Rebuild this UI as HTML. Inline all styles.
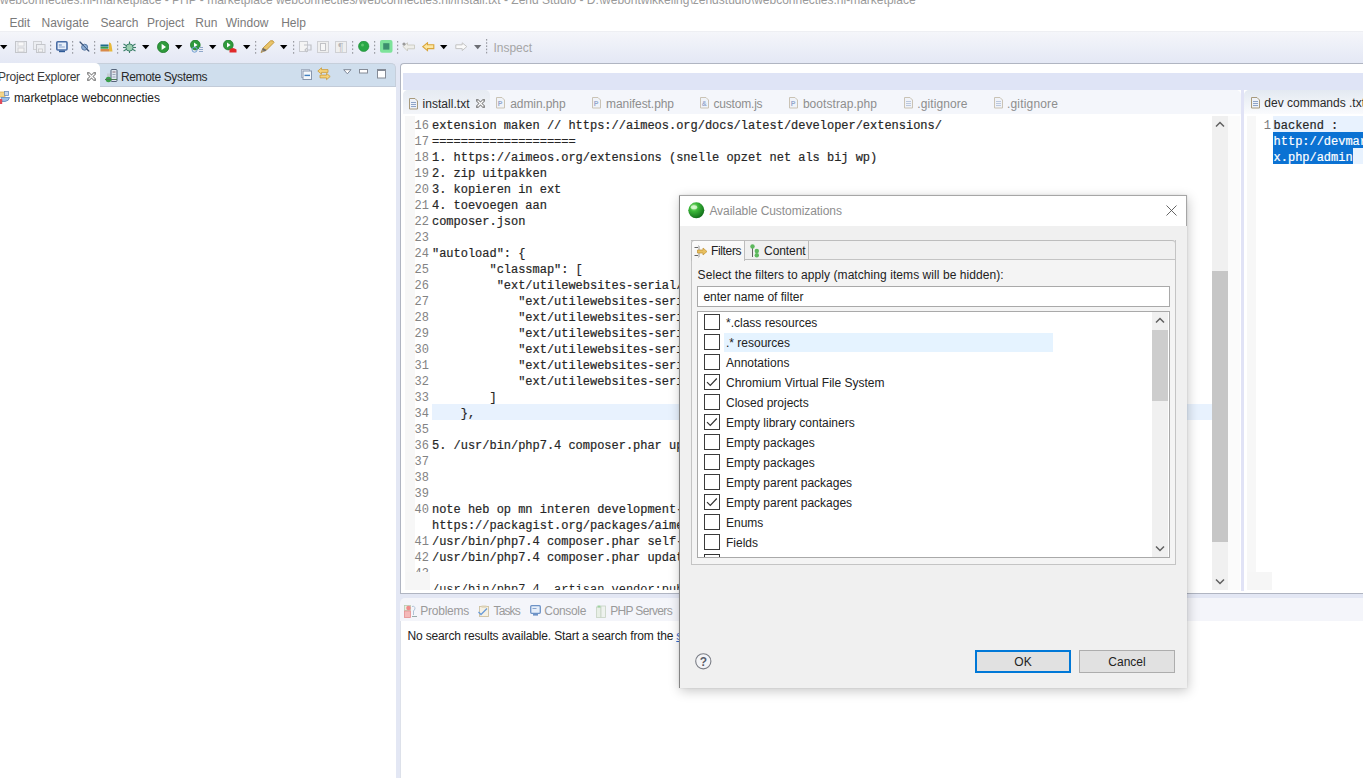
<!DOCTYPE html>
<html><head><meta charset="utf-8"><style>
html,body{margin:0;padding:0;width:1363px;height:778px;overflow:hidden;background:#fff}
body>div{position:absolute}
.t{position:absolute;white-space:pre}
</style></head><body>
<div style="left:0px;top:0px;width:1363px;height:31px;background:#fff"></div><div class="t " style="left:0px;top:-5.76px;font-size:12px;line-height:12px;color:#9a9a9a;font-family:'Liberation Sans', sans-serif;">webconnecties.nl-marketplace - PHP - marketplace webconnecties/webconnecties.nl/install.txt - Zend Studio - D:\webontwikkeling\zendstudio\webconnecties.nl-marketplace</div><div class="t " style="left:9.4px;top:16.84px;font-size:12px;line-height:12px;color:#7a7a7a;font-family:'Liberation Sans', sans-serif;">Edit</div><div class="t " style="left:41.5px;top:16.84px;font-size:12px;line-height:12px;color:#7a7a7a;font-family:'Liberation Sans', sans-serif;">Navigate</div><div class="t " style="left:100.5px;top:16.84px;font-size:12px;line-height:12px;color:#7a7a7a;font-family:'Liberation Sans', sans-serif;">Search</div><div class="t " style="left:147px;top:16.84px;font-size:12px;line-height:12px;color:#7a7a7a;font-family:'Liberation Sans', sans-serif;">Project</div><div class="t " style="left:195.3px;top:16.84px;font-size:12px;line-height:12px;color:#7a7a7a;font-family:'Liberation Sans', sans-serif;">Run</div><div class="t " style="left:225.8px;top:16.84px;font-size:12px;line-height:12px;color:#7a7a7a;font-family:'Liberation Sans', sans-serif;">Window</div><div class="t " style="left:281.2px;top:16.84px;font-size:12px;line-height:12px;color:#7a7a7a;font-family:'Liberation Sans', sans-serif;">Help</div><div style="left:0px;top:31px;width:1363px;height:32px;background:linear-gradient(#f5f6fa,#e4e8f5)"></div><div style="left:0px;top:30.5px;width:1363px;height:1.5px;background:#eeeff3"></div><svg style="position:absolute;left:0.4px;top:44.6px" width="8" height="5" viewBox="0 0 8 5"><path d="M0,0 L7.4,0 L3.7,4.3 Z" fill="#000"/></svg><svg style="position:absolute;left:15px;top:41px" width="13" height="12" viewBox="0 0 13 12"><rect x="0.5" y="0.5" width="11" height="11" fill="#eceef2" stroke="#c4c6cb"/><rect x="3" y="1" width="6" height="4" fill="#f8f8f8" stroke="#cfd0d4" stroke-width="0.8"/><rect x="3" y="7" width="6" height="4" fill="#f4f4f4" stroke="#c8c9cd" stroke-width="0.8"/></svg><svg style="position:absolute;left:33px;top:41px" width="13" height="12" viewBox="0 0 13 12"><rect x="0.5" y="0.5" width="8" height="8" fill="#eceef2" stroke="#cfd1d5"/><rect x="3.5" y="3.5" width="8.5" height="8" fill="#eceef2" stroke="#c4c6cb"/><rect x="5.5" y="8" width="4" height="3" fill="#f4f4f4" stroke="#c8c9cd" stroke-width="0.8"/></svg><svg style="position:absolute;left:49.9px;top:40.8px" width="2" height="14.8" viewBox="0 0 2 14.8"><rect x="0" y="0.0" width="1.2" height="1.6" fill="#9a9ca3"/><rect x="0" y="3.7" width="1.2" height="1.6" fill="#9a9ca3"/><rect x="0" y="7.4" width="1.2" height="1.6" fill="#9a9ca3"/><rect x="0" y="11.1" width="1.2" height="1.6" fill="#9a9ca3"/></svg><svg style="position:absolute;left:56px;top:40.5px" width="12" height="12" viewBox="0 0 12 12"><rect x="0.8" y="0.8" width="10.2" height="8.2" rx="1" fill="#e8f0fb" stroke="#4a6ea6" stroke-width="1.6"/><rect x="2.8" y="3.5" width="3" height="1" fill="#5a7fb5"/><rect x="2.8" y="5.5" width="6" height="1" fill="#8aa4cc"/><rect x="3" y="9.6" width="6" height="1.6" fill="#2f5a96"/></svg><svg style="position:absolute;left:71.80000000000001px;top:40.8px" width="2" height="14.8" viewBox="0 0 2 14.8"><rect x="0" y="0.0" width="1.2" height="1.6" fill="#9a9ca3"/><rect x="0" y="3.7" width="1.2" height="1.6" fill="#9a9ca3"/><rect x="0" y="7.4" width="1.2" height="1.6" fill="#9a9ca3"/><rect x="0" y="11.1" width="1.2" height="1.6" fill="#9a9ca3"/></svg><svg style="position:absolute;left:78.5px;top:40.5px" width="11" height="11" viewBox="0 0 11 11"><line x1="0.8" y1="0.8" x2="10" y2="10.3" stroke="#4d6488" stroke-width="1.3"/><circle cx="5.6" cy="6.2" r="3" fill="#8fb0d8" stroke="#5b7aa3" stroke-width="1"/><line x1="0.8" y1="0.8" x2="10" y2="10.3" stroke="#3f5577" stroke-width="1"/></svg><svg style="position:absolute;left:94.4px;top:40.8px" width="2" height="14.8" viewBox="0 0 2 14.8"><rect x="0" y="0.0" width="1.2" height="1.6" fill="#9a9ca3"/><rect x="0" y="3.7" width="1.2" height="1.6" fill="#9a9ca3"/><rect x="0" y="7.4" width="1.2" height="1.6" fill="#9a9ca3"/><rect x="0" y="11.1" width="1.2" height="1.6" fill="#9a9ca3"/></svg><svg style="position:absolute;left:99.5px;top:41.5px" width="13" height="10" viewBox="0 0 13 10"><rect x="0.5" y="2.5" width="8" height="2" fill="#1f6c8a"/><rect x="0.5" y="4.7" width="8" height="2" fill="#3a9a4a"/><rect x="0.5" y="7" width="8.5" height="2.5" fill="#d88a4a"/><path d="M9,0.5 Q11,0 11.5,3 L12.5,9.5 L9,9.5 Z" fill="#e8b83a"/></svg><svg style="position:absolute;left:116.9px;top:40.8px" width="2" height="14.8" viewBox="0 0 2 14.8"><rect x="0" y="0.0" width="1.2" height="1.6" fill="#9a9ca3"/><rect x="0" y="3.7" width="1.2" height="1.6" fill="#9a9ca3"/><rect x="0" y="7.4" width="1.2" height="1.6" fill="#9a9ca3"/><rect x="0" y="11.1" width="1.2" height="1.6" fill="#9a9ca3"/></svg><svg style="position:absolute;left:123px;top:40.5px" width="13" height="12.5" viewBox="0 0 13 12.5"><g stroke="#3d7f6a" stroke-width="1.1"><line x1="6.5" y1="0.5" x2="6.5" y2="12"/><line x1="0.5" y1="3" x2="12.5" y2="10"/><line x1="0.5" y1="10" x2="12.5" y2="3"/><line x1="0" y1="6.5" x2="13" y2="6.5"/></g><circle cx="6.5" cy="6.5" r="3.6" fill="#9bd0b0" stroke="#3d7f6a" stroke-width="1"/></svg><svg style="position:absolute;left:142px;top:44.6px" width="8" height="5" viewBox="0 0 8 5"><path d="M0,0 L7.4,0 L3.7,4.3 Z" fill="#000"/></svg><svg style="position:absolute;left:156.5px;top:40.5px" width="12.5" height="12" viewBox="0 0 12.5 12"><circle cx="6.2" cy="5.9" r="5.7" fill="#2f9a3c" stroke="#1e7a2a" stroke-width="0.8"/><path d="M4.6,2.8 L9,5.9 L4.6,9 Z" fill="#fff"/></svg><svg style="position:absolute;left:175.4px;top:44.6px" width="8" height="5" viewBox="0 0 8 5"><path d="M0,0 L7.4,0 L3.7,4.3 Z" fill="#000"/></svg><svg style="position:absolute;left:189.5px;top:39.8px" width="14" height="13" viewBox="0 0 14 13"><circle cx="5.3" cy="5" r="4.9" fill="#2f9a3c" stroke="#1e7a2a" stroke-width="0.7"/><path d="M4,2.5 L7.6,5 L4,7.6 Z" fill="#fff"/><circle cx="4.6" cy="9.6" r="2.6" fill="none" stroke="#6f9ed0" stroke-width="1"/><rect x="9" y="7" width="4" height="1" fill="#8fa7c9"/><rect x="9" y="9" width="4" height="1" fill="#8fa7c9"/><rect x="9" y="11" width="4" height="1" fill="#8fa7c9"/></svg><svg style="position:absolute;left:208.8px;top:44.6px" width="8" height="5" viewBox="0 0 8 5"><path d="M0,0 L7.4,0 L3.7,4.3 Z" fill="#000"/></svg><svg style="position:absolute;left:222.5px;top:39.8px" width="14" height="13" viewBox="0 0 14 13"><circle cx="5.3" cy="5" r="4.9" fill="#2f9a3c" stroke="#1e7a2a" stroke-width="0.7"/><path d="M4,2.5 L7.6,5 L4,7.6 Z" fill="#fff"/><path d="M6.5,12.5 L6.5,9.5 Q9.5,6.5 13.5,9.5 L13.5,12.5 Z" fill="#e02a2a"/></svg><svg style="position:absolute;left:242.7px;top:44.6px" width="8" height="5" viewBox="0 0 8 5"><path d="M0,0 L7.4,0 L3.7,4.3 Z" fill="#000"/></svg><svg style="position:absolute;left:255.1px;top:40.8px" width="2" height="14.8" viewBox="0 0 2 14.8"><rect x="0" y="0.0" width="1.2" height="1.6" fill="#9a9ca3"/><rect x="0" y="3.7" width="1.2" height="1.6" fill="#9a9ca3"/><rect x="0" y="7.4" width="1.2" height="1.6" fill="#9a9ca3"/><rect x="0" y="11.1" width="1.2" height="1.6" fill="#9a9ca3"/></svg><svg style="position:absolute;left:260px;top:40px" width="15" height="13" viewBox="0 0 15 13"><path d="M1,12.5 L3,8 L10.5,0.8 Q13.5,0 14,2.5 L6.5,10 Z" fill="#e9c46a" stroke="#b88a2a" stroke-width="0.8"/><path d="M1,12.5 L3,8 L6.5,10 Z" fill="#9a9388"/><path d="M3,8 L6.5,10 L5,11.5 L2.2,9.8Z" fill="#6f6a62"/></svg><svg style="position:absolute;left:280.3px;top:44.6px" width="8" height="5" viewBox="0 0 8 5"><path d="M0,0 L7.4,0 L3.7,4.3 Z" fill="#000"/></svg><svg style="position:absolute;left:292.59999999999997px;top:40.8px" width="2" height="14.8" viewBox="0 0 2 14.8"><rect x="0" y="0.0" width="1.2" height="1.6" fill="#9a9ca3"/><rect x="0" y="3.7" width="1.2" height="1.6" fill="#9a9ca3"/><rect x="0" y="7.4" width="1.2" height="1.6" fill="#9a9ca3"/><rect x="0" y="11.1" width="1.2" height="1.6" fill="#9a9ca3"/></svg><svg style="position:absolute;left:298.5px;top:41px" width="13" height="12" viewBox="0 0 13 12"><rect x="0.5" y="0.5" width="8" height="10" fill="#f4f4f4" stroke="#c9cbd0"/><path d="M5,4 L12,4 L12,9 L8,9" fill="none" stroke="#c0c2c7" stroke-width="1.2"/><path d="M8,7 L6,9 L8,11" fill="none" stroke="#c0c2c7" stroke-width="1.1"/></svg><svg style="position:absolute;left:316.5px;top:41px" width="13" height="12" viewBox="0 0 13 12"><rect x="0.5" y="0.5" width="11" height="11" fill="#efefef" stroke="#cfd0d4"/><rect x="3.5" y="2.5" width="5" height="7" fill="#f7f7f7" stroke="#c2c3c7"/></svg><svg style="position:absolute;left:335px;top:41px" width="13" height="12" viewBox="0 0 13 12"><rect x="0.5" y="0.5" width="11" height="11" fill="#efefef" stroke="#cfd0d4"/><text x="3" y="10" font-size="10" fill="#b5b6ba" font-family="Liberation Sans">&#182;</text></svg><svg style="position:absolute;left:351.7px;top:40.8px" width="2" height="14.8" viewBox="0 0 2 14.8"><rect x="0" y="0.0" width="1.2" height="1.6" fill="#9a9ca3"/><rect x="0" y="3.7" width="1.2" height="1.6" fill="#9a9ca3"/><rect x="0" y="7.4" width="1.2" height="1.6" fill="#9a9ca3"/><rect x="0" y="11.1" width="1.2" height="1.6" fill="#9a9ca3"/></svg><svg style="position:absolute;left:357.5px;top:41px" width="12" height="11" viewBox="0 0 12 11"><circle cx="5.7" cy="5.3" r="5.2" fill="#28a745" stroke="#1f8a38" stroke-width="0.6"/><circle cx="4.5" cy="4" r="1.5" fill="#5cc46d"/></svg><svg style="position:absolute;left:374.29999999999995px;top:40.8px" width="2" height="14.8" viewBox="0 0 2 14.8"><rect x="0" y="0.0" width="1.2" height="1.6" fill="#9a9ca3"/><rect x="0" y="3.7" width="1.2" height="1.6" fill="#9a9ca3"/><rect x="0" y="7.4" width="1.2" height="1.6" fill="#9a9ca3"/><rect x="0" y="11.1" width="1.2" height="1.6" fill="#9a9ca3"/></svg><svg style="position:absolute;left:379.5px;top:40px" width="13" height="13" viewBox="0 0 13 13"><rect x="0" y="0" width="12.5" height="12.8" rx="2" fill="#7de39a"/><rect x="3.2" y="3.2" width="6.2" height="6.4" fill="#3b8f6e"/></svg><svg style="position:absolute;left:396.59999999999997px;top:40.8px" width="2" height="14.8" viewBox="0 0 2 14.8"><rect x="0" y="0.0" width="1.2" height="1.6" fill="#9a9ca3"/><rect x="0" y="3.7" width="1.2" height="1.6" fill="#9a9ca3"/><rect x="0" y="7.4" width="1.2" height="1.6" fill="#9a9ca3"/><rect x="0" y="11.1" width="1.2" height="1.6" fill="#9a9ca3"/></svg><svg style="position:absolute;left:401.5px;top:41.5px" width="14" height="10" viewBox="0 0 14 10"><path d="M1,4.5 L5.5,0.8 L5.5,3 L12.5,3 L12.5,6.8 L5.5,6.8 L5.5,9 Z" fill="#eeeeea" stroke="#c8c8c0" stroke-width="0.9"/><circle cx="2" cy="2" r="1.6" fill="#9a9a9a"/></svg><svg style="position:absolute;left:421.5px;top:41.5px" width="13" height="10" viewBox="0 0 13 10"><path d="M0.8,4.6 L5.5,0.8 L5.5,2.8 L11.8,2.8 L11.8,6.6 L5.5,6.6 L5.5,8.6 Z" fill="#fde7a0" stroke="#d9a53a" stroke-width="1.1"/></svg><svg style="position:absolute;left:440px;top:44.6px" width="8" height="5" viewBox="0 0 8 5"><path d="M0,0 L7.4,0 L3.7,4.3 Z" fill="#000"/></svg><svg style="position:absolute;left:455px;top:41.5px" width="13" height="10" viewBox="0 0 13 10"><path d="M11.8,4.6 L7.2,0.8 L7.2,2.8 L0.8,2.8 L0.8,6.6 L7.2,6.6 L7.2,8.6 Z" fill="#fafafa" stroke="#c4c4c4" stroke-width="1"/></svg><svg style="position:absolute;left:474.2px;top:44.6px" width="8" height="5" viewBox="0 0 8 5"><path d="M0,0 L7.4,0 L3.7,4.3 Z" fill="#6c6e74"/></svg><svg style="position:absolute;left:486.2px;top:38.6px" width="2" height="16.0" viewBox="0 0 2 16.0"><rect x="0" y="0.0" width="1.2" height="1.6" fill="#9a9ca3"/><rect x="0" y="3.2" width="1.2" height="1.6" fill="#9a9ca3"/><rect x="0" y="6.4" width="1.2" height="1.6" fill="#9a9ca3"/><rect x="0" y="9.6" width="1.2" height="1.6" fill="#9a9ca3"/><rect x="0" y="12.8" width="1.2" height="1.6" fill="#9a9ca3"/></svg><div class="t " style="left:493.4px;top:41.64px;font-size:12px;line-height:12px;color:#a6a6a6;font-family:'Liberation Sans', sans-serif;">Inspect</div><div style="left:0px;top:63px;width:1363px;height:715px;background:#e3e7f4"></div><div style="left:0px;top:63px;width:396px;height:23px;background:#cfdeed;border-top:1px solid #c6cfdb;border-right:1px solid #c6cfdb;box-sizing:border-box;border-top-right-radius:5px"></div><div style="left:0px;top:63px;width:100px;height:23px;background:#fff;border-top-right-radius:5px"></div><div style="left:0px;top:86px;width:396px;height:692px;background:#fff"></div><div class="t " style="left:-2px;top:70.84px;font-size:12px;line-height:12px;color:#3a3a3a;font-family:'Liberation Sans', sans-serif;letter-spacing:-0.217px;">Project Explorer</div><svg style="position:absolute;left:86.5px;top:72px" width="9" height="9" viewBox="0 0 9 9"><path d="M1.3,1.3 L7.7,7.7 M7.7,1.3 L1.3,7.7" stroke="#8c8c8c" stroke-width="3.1" stroke-linecap="square"/><path d="M1.6,1.6 L7.4,7.4 M7.4,1.6 L1.6,7.4" stroke="#fff" stroke-width="1.3" stroke-linecap="butt"/></svg><svg style="position:absolute;left:105px;top:69px" width="13" height="14" viewBox="0 0 13 14"><rect x="6" y="0.5" width="6" height="12" rx="1" fill="#dfe6ef" stroke="#56647a" stroke-width="1"/><rect x="7.5" y="2.5" width="3" height="1" fill="#8a6e78"/><rect x="7.5" y="5" width="3" height="1" fill="#9aa6b8"/><rect x="7.5" y="7.5" width="3" height="1" fill="#9aa6b8"/><rect x="2" y="4.5" width="3" height="4" fill="#c5ccd4"/><circle cx="3.5" cy="10.5" r="2.8" fill="#3aa04a"/><rect x="0" y="10" width="12" height="1" fill="#4a7a56"/></svg><div class="t " style="left:120.9px;top:70.84px;font-size:12px;line-height:12px;color:#2a2a2a;font-family:'Liberation Sans', sans-serif;letter-spacing:-0.359px;">Remote Systems</div><svg style="position:absolute;left:300.5px;top:69px" width="11" height="11" viewBox="0 0 11 11"><rect x="0.5" y="0.5" width="8" height="8" fill="#e8eef6" stroke="#a6b2c4"/><rect x="2" y="2" width="8.5" height="8.5" fill="#f4f8fc" stroke="#8796ad"/><rect x="3.5" y="5.7" width="5.5" height="1.4" fill="#3f7fc0"/></svg><svg style="position:absolute;left:316.5px;top:66.5px" width="14" height="14" viewBox="0 0 14 14"><path d="M0.8,4 L4.5,0.8 L4.5,2.6 L11,2.6 L11,5.4 L4.5,5.4 L4.5,7.2 Z" fill="#f6d27a" stroke="#c99a3a" stroke-width="0.8"/><path d="M13.2,9.5 L9.5,6.3 L9.5,8.1 L3,8.1 L3,10.9 L9.5,10.9 L9.5,12.7 Z" fill="#f6d27a" stroke="#c99a3a" stroke-width="0.8"/></svg><svg style="position:absolute;left:342.5px;top:69px" width="9" height="6" viewBox="0 0 9 6"><path d="M0.7,0.7 L8,0.7 L4.35,4.8 Z" fill="#fff" stroke="#7d8696" stroke-width="1"/></svg><svg style="position:absolute;left:358.5px;top:69px" width="9" height="5" viewBox="0 0 9 5"><rect x="0.5" y="0.5" width="8" height="3.5" fill="#fff" stroke="#858b96" stroke-width="1"/></svg><svg style="position:absolute;left:376.5px;top:68.8px" width="9" height="10" viewBox="0 0 9 10"><rect x="0.5" y="0.5" width="8" height="8.5" fill="#fff" stroke="#858b96" stroke-width="1"/><rect x="0.5" y="0.5" width="8" height="1.5" fill="#858b96"/></svg><div style="left:0px;top:85.5px;width:396px;height:1px;background:#c2cbd8"></div><div style="left:0px;top:85.5px;width:100px;height:1px;background:#fff"></div><svg style="position:absolute;left:-1px;top:91px" width="11" height="13" viewBox="0 0 11 13"><rect x="0" y="1" width="6" height="5" fill="#f4d68a" stroke="#d4aa50" stroke-width="0.7"/><rect x="5.5" y="0.5" width="4" height="4" fill="#c8d8ee" stroke="#6d8fb8" stroke-width="0.8"/><path d="M2,6.5 L10.5,6.5 Q10,10 6,10.5 L3,10.5 Z" fill="#9cc0ea" stroke="#5a86bd" stroke-width="0.8"/><rect x="0" y="8" width="3.2" height="5" fill="#e04a5a"/></svg><div class="t " style="left:13.9px;top:92.04px;font-size:12px;line-height:12px;color:#222;font-family:'Liberation Sans', sans-serif;letter-spacing:-0.084px;">marketplace webconnecties</div><div style="left:400px;top:63px;width:963px;height:531px;background:#fff;border:1px solid #b0b5c2;border-right:none;border-top-left-radius:4px;box-sizing:border-box"></div><div style="left:403px;top:73px;width:960px;height:17px;background:#dfe4f6"></div><div style="left:403px;top:90px;width:838px;height:24px;background:#f4f6fb;border-top-left-radius:5px;border-top-right-radius:5px"></div><div style="left:403px;top:114px;width:838px;height:476px;background:#fff"></div><div style="left:1241px;top:90px;width:3px;height:501px;background:#e1e3f6"></div><div style="left:1244px;top:90px;width:119px;height:24px;background:linear-gradient(#e3e9f1,#fafbfd);border-top-left-radius:5px"></div><div style="left:1244px;top:114px;width:119px;height:476px;background:#fff"></div><div style="left:405px;top:116px;width:10px;height:474px;background:#f7f7f7"></div><div style="left:432px;top:404px;width:780px;height:16px;background:#e8f2fe"></div><div class="t " style="left:414.59375px;top:119.71px;font-size:12px;line-height:12px;color:#838383;font-family:'Liberation Mono', monospace;">16</div><div class="t " style="left:432px;top:119.71px;font-size:12px;line-height:12px;color:#262626;font-family:'Liberation Mono', monospace;letter-spacing:-0.020px;-webkit-text-stroke:0.2px #262626;">extension maken // https://aimeos.org/docs/latest/developer/extensions/</div><div class="t " style="left:414.59375px;top:135.71px;font-size:12px;line-height:12px;color:#838383;font-family:'Liberation Mono', monospace;">17</div><div class="t " style="left:432px;top:135.71px;font-size:12px;line-height:12px;color:#262626;font-family:'Liberation Mono', monospace;letter-spacing:-0.020px;-webkit-text-stroke:0.2px #262626;">====================</div><div class="t " style="left:414.59375px;top:151.71px;font-size:12px;line-height:12px;color:#838383;font-family:'Liberation Mono', monospace;">18</div><div class="t " style="left:432px;top:151.71px;font-size:12px;line-height:12px;color:#262626;font-family:'Liberation Mono', monospace;letter-spacing:-0.020px;-webkit-text-stroke:0.2px #262626;">1. https://aimeos.org/extensions (snelle opzet net als bij wp)</div><div class="t " style="left:414.59375px;top:167.71px;font-size:12px;line-height:12px;color:#838383;font-family:'Liberation Mono', monospace;">19</div><div class="t " style="left:432px;top:167.71px;font-size:12px;line-height:12px;color:#262626;font-family:'Liberation Mono', monospace;letter-spacing:-0.020px;-webkit-text-stroke:0.2px #262626;">2. zip uitpakken</div><div class="t " style="left:414.59375px;top:183.71px;font-size:12px;line-height:12px;color:#838383;font-family:'Liberation Mono', monospace;">20</div><div class="t " style="left:432px;top:183.71px;font-size:12px;line-height:12px;color:#262626;font-family:'Liberation Mono', monospace;letter-spacing:-0.020px;-webkit-text-stroke:0.2px #262626;">3. kopieren in ext</div><div class="t " style="left:414.59375px;top:199.71px;font-size:12px;line-height:12px;color:#838383;font-family:'Liberation Mono', monospace;">21</div><div class="t " style="left:432px;top:199.71px;font-size:12px;line-height:12px;color:#262626;font-family:'Liberation Mono', monospace;letter-spacing:-0.020px;-webkit-text-stroke:0.2px #262626;">4. toevoegen aan</div><div class="t " style="left:414.59375px;top:215.71px;font-size:12px;line-height:12px;color:#838383;font-family:'Liberation Mono', monospace;">22</div><div class="t " style="left:432px;top:215.71px;font-size:12px;line-height:12px;color:#262626;font-family:'Liberation Mono', monospace;letter-spacing:-0.020px;-webkit-text-stroke:0.2px #262626;">composer.json</div><div class="t " style="left:414.59375px;top:231.71px;font-size:12px;line-height:12px;color:#838383;font-family:'Liberation Mono', monospace;">23</div><div class="t " style="left:414.59375px;top:247.71px;font-size:12px;line-height:12px;color:#838383;font-family:'Liberation Mono', monospace;">24</div><div class="t " style="left:432px;top:247.71px;font-size:12px;line-height:12px;color:#262626;font-family:'Liberation Mono', monospace;letter-spacing:-0.020px;-webkit-text-stroke:0.2px #262626;">&quot;autoload&quot;: {</div><div class="t " style="left:414.59375px;top:263.71px;font-size:12px;line-height:12px;color:#838383;font-family:'Liberation Mono', monospace;">25</div><div class="t " style="left:432px;top:263.71px;font-size:12px;line-height:12px;color:#262626;font-family:'Liberation Mono', monospace;letter-spacing:-0.020px;-webkit-text-stroke:0.2px #262626;">        &quot;classmap&quot;: [</div><div class="t " style="left:414.59375px;top:279.71px;font-size:12px;line-height:12px;color:#838383;font-family:'Liberation Mono', monospace;">26</div><div class="t " style="left:432px;top:279.71px;font-size:12px;line-height:12px;color:#262626;font-family:'Liberation Mono', monospace;letter-spacing:-0.020px;-webkit-text-stroke:0.2px #262626;">         &quot;ext/utilewebsites-serial/lib/custom/setup&quot;,</div><div class="t " style="left:414.59375px;top:295.71px;font-size:12px;line-height:12px;color:#838383;font-family:'Liberation Mono', monospace;">27</div><div class="t " style="left:432px;top:295.71px;font-size:12px;line-height:12px;color:#262626;font-family:'Liberation Mono', monospace;letter-spacing:-0.020px;-webkit-text-stroke:0.2px #262626;">            &quot;ext/utilewebsites-serial/lib/custom/src&quot;,</div><div class="t " style="left:414.59375px;top:311.71px;font-size:12px;line-height:12px;color:#838383;font-family:'Liberation Mono', monospace;">28</div><div class="t " style="left:432px;top:311.71px;font-size:12px;line-height:12px;color:#262626;font-family:'Liberation Mono', monospace;letter-spacing:-0.020px;-webkit-text-stroke:0.2px #262626;">            &quot;ext/utilewebsites-serial/controller/common/src&quot;,</div><div class="t " style="left:414.59375px;top:327.71px;font-size:12px;line-height:12px;color:#838383;font-family:'Liberation Mono', monospace;">29</div><div class="t " style="left:432px;top:327.71px;font-size:12px;line-height:12px;color:#262626;font-family:'Liberation Mono', monospace;letter-spacing:-0.020px;-webkit-text-stroke:0.2px #262626;">            &quot;ext/utilewebsites-serial/controller/frontend/src&quot;,</div><div class="t " style="left:414.59375px;top:343.71px;font-size:12px;line-height:12px;color:#838383;font-family:'Liberation Mono', monospace;">30</div><div class="t " style="left:432px;top:343.71px;font-size:12px;line-height:12px;color:#262626;font-family:'Liberation Mono', monospace;letter-spacing:-0.020px;-webkit-text-stroke:0.2px #262626;">            &quot;ext/utilewebsites-serial/admin/jqadm/src&quot;,</div><div class="t " style="left:414.59375px;top:359.71px;font-size:12px;line-height:12px;color:#838383;font-family:'Liberation Mono', monospace;">31</div><div class="t " style="left:432px;top:359.71px;font-size:12px;line-height:12px;color:#262626;font-family:'Liberation Mono', monospace;letter-spacing:-0.020px;-webkit-text-stroke:0.2px #262626;">            &quot;ext/utilewebsites-serial/admin/jsonadm/src&quot;,</div><div class="t " style="left:414.59375px;top:375.71px;font-size:12px;line-height:12px;color:#838383;font-family:'Liberation Mono', monospace;">32</div><div class="t " style="left:432px;top:375.71px;font-size:12px;line-height:12px;color:#262626;font-family:'Liberation Mono', monospace;letter-spacing:-0.020px;-webkit-text-stroke:0.2px #262626;">            &quot;ext/utilewebsites-serial/client/html/src&quot;</div><div class="t " style="left:414.59375px;top:391.71px;font-size:12px;line-height:12px;color:#838383;font-family:'Liberation Mono', monospace;">33</div><div class="t " style="left:432px;top:391.71px;font-size:12px;line-height:12px;color:#262626;font-family:'Liberation Mono', monospace;letter-spacing:-0.020px;-webkit-text-stroke:0.2px #262626;">        ]</div><div class="t " style="left:414.59375px;top:407.71px;font-size:12px;line-height:12px;color:#838383;font-family:'Liberation Mono', monospace;">34</div><div class="t " style="left:432px;top:407.71px;font-size:12px;line-height:12px;color:#262626;font-family:'Liberation Mono', monospace;letter-spacing:-0.020px;-webkit-text-stroke:0.2px #262626;">    },</div><div class="t " style="left:414.59375px;top:423.71px;font-size:12px;line-height:12px;color:#838383;font-family:'Liberation Mono', monospace;">35</div><div class="t " style="left:414.59375px;top:439.71px;font-size:12px;line-height:12px;color:#838383;font-family:'Liberation Mono', monospace;">36</div><div class="t " style="left:432px;top:439.71px;font-size:12px;line-height:12px;color:#262626;font-family:'Liberation Mono', monospace;letter-spacing:-0.020px;-webkit-text-stroke:0.2px #262626;">5. /usr/bin/php7.4 composer.phar update</div><div class="t " style="left:414.59375px;top:455.71px;font-size:12px;line-height:12px;color:#838383;font-family:'Liberation Mono', monospace;">37</div><div class="t " style="left:414.59375px;top:471.71px;font-size:12px;line-height:12px;color:#838383;font-family:'Liberation Mono', monospace;">38</div><div class="t " style="left:414.59375px;top:487.71px;font-size:12px;line-height:12px;color:#838383;font-family:'Liberation Mono', monospace;">39</div><div class="t " style="left:414.59375px;top:503.71px;font-size:12px;line-height:12px;color:#838383;font-family:'Liberation Mono', monospace;">40</div><div class="t " style="left:432px;top:503.71px;font-size:12px;line-height:12px;color:#262626;font-family:'Liberation Mono', monospace;letter-spacing:-0.020px;-webkit-text-stroke:0.2px #262626;">note heb op mn interen development-server</div><div class="t " style="left:432px;top:519.71px;font-size:12px;line-height:12px;color:#262626;font-family:'Liberation Mono', monospace;letter-spacing:-0.020px;-webkit-text-stroke:0.2px #262626;">https://packagist.org/packages/aimeos/aimeos-laravel</div><div class="t " style="left:414.59375px;top:535.71px;font-size:12px;line-height:12px;color:#838383;font-family:'Liberation Mono', monospace;">41</div><div class="t " style="left:432px;top:535.71px;font-size:12px;line-height:12px;color:#262626;font-family:'Liberation Mono', monospace;letter-spacing:-0.020px;-webkit-text-stroke:0.2px #262626;">/usr/bin/php7.4 composer.phar self-update</div><div class="t " style="left:414.59375px;top:551.71px;font-size:12px;line-height:12px;color:#838383;font-family:'Liberation Mono', monospace;">42</div><div class="t " style="left:432px;top:551.71px;font-size:12px;line-height:12px;color:#262626;font-family:'Liberation Mono', monospace;letter-spacing:-0.020px;-webkit-text-stroke:0.2px #262626;">/usr/bin/php7.4 composer.phar update</div><div style="left:405px;top:566px;width:807px;height:6px;overflow:hidden"><div class="t " style="left:9.59375px;top:1.71px;font-size:12px;line-height:12px;color:#7a7a7a;font-family:'Liberation Mono', monospace;">43</div></div><div style="left:432px;top:582px;width:780px;height:8px;overflow:hidden"><div class="t " style="left:0px;top:1.71px;font-size:12px;line-height:12px;color:#262626;font-family:'Liberation Mono', monospace;letter-spacing:-0.020px;">/usr/bin/php7.4  artisan vendor:publish</div></div><div style="left:406px;top:572px;width:24px;height:18px;background:#f6f6f6"></div><div style="left:1212px;top:116px;width:16px;height:474px;background:#f0f0f0"></div><div style="left:1212px;top:271px;width:16px;height:271px;background:#c6c6c6"></div><svg style="position:absolute;left:1215px;top:121px" width="10" height="7" viewBox="0 0 10 7"><path d="M1,5.5 L5,1.5 L9,5.5" fill="none" stroke="#606060" stroke-width="1.5"/></svg><svg style="position:absolute;left:1215px;top:577.5px" width="10" height="7" viewBox="0 0 10 7"><path d="M1,1.5 L5,5.5 L9,1.5" fill="none" stroke="#606060" stroke-width="1.5"/></svg><div style="left:1228px;top:116px;width:12px;height:474px;background:#fbfbfb"></div><div style="left:403px;top:90px;width:87px;height:24px;background:linear-gradient(#e6ebf2,#f3f5f9);border-top-left-radius:5px;border-top-right-radius:5px"></div><svg style="position:absolute;left:409px;top:97.5px" width="9" height="12" viewBox="0 0 9 12"><g opacity="1"><path d="M0.5,0.5 L6,0.5 L8.5,3 L8.5,11 L0.5,11 Z" fill="#eef2f8" stroke="#a89a7c"/><rect x="2" y="4" width="5" height="1" fill="#8ea4c8"/><rect x="2" y="6" width="5" height="1" fill="#8ea4c8"/><rect x="2" y="8" width="5" height="1" fill="#8ea4c8"/></g></svg><div class="t " style="left:422.5px;top:97.54px;font-size:12px;line-height:12px;color:#2a2a2a;font-family:'Liberation Sans', sans-serif;letter-spacing:0.031px;">install.txt</div><svg style="position:absolute;left:476px;top:98.5px" width="9" height="9" viewBox="0 0 9 9"><path d="M1.3,1.3 L7.7,7.7 M7.7,1.3 L1.3,7.7" stroke="#8a8a8a" stroke-width="3.1" stroke-linecap="square"/><path d="M1.6,1.6 L7.4,7.4 M7.4,1.6 L1.6,7.4" stroke="#fff" stroke-width="1.3" stroke-linecap="butt"/></svg><svg style="position:absolute;left:496px;top:97px" width="9" height="12" viewBox="0 0 9 12"><g opacity="0.55"><path d="M0.5,0.5 L6,0.5 L8.5,3 L8.5,11 L0.5,11 Z" fill="#eef2f8" stroke="#a89a7c"/><text x="1.8" y="9" font-size="7" font-family="Liberation Sans" font-weight="bold" fill="#4a6aa8">P</text></g></svg><div class="t " style="left:510.2px;top:97.54px;font-size:12px;line-height:12px;color:#8e8e8e;font-family:'Liberation Sans', sans-serif;letter-spacing:-0.074px;">admin.php</div><svg style="position:absolute;left:592px;top:97px" width="9" height="12" viewBox="0 0 9 12"><g opacity="0.55"><path d="M0.5,0.5 L6,0.5 L8.5,3 L8.5,11 L0.5,11 Z" fill="#eef2f8" stroke="#a89a7c"/><text x="1.8" y="9" font-size="7" font-family="Liberation Sans" font-weight="bold" fill="#4a6aa8">P</text></g></svg><div class="t " style="left:606px;top:97.54px;font-size:12px;line-height:12px;color:#8e8e8e;font-family:'Liberation Sans', sans-serif;letter-spacing:-0.060px;">manifest.php</div><svg style="position:absolute;left:700px;top:97px" width="9" height="12" viewBox="0 0 9 12"><g opacity="0.55"><path d="M0.5,0.5 L6,0.5 L8.5,3 L8.5,11 L0.5,11 Z" fill="#eef2f8" stroke="#a89a7c"/><text x="1.8" y="9" font-size="7" font-family="Liberation Sans" font-weight="bold" fill="#4a6aa8">&amp;</text></g></svg><div class="t " style="left:713.5px;top:97.54px;font-size:12px;line-height:12px;color:#8e8e8e;font-family:'Liberation Sans', sans-serif;letter-spacing:-0.197px;">custom.js</div><svg style="position:absolute;left:789px;top:97px" width="9" height="12" viewBox="0 0 9 12"><g opacity="0.55"><path d="M0.5,0.5 L6,0.5 L8.5,3 L8.5,11 L0.5,11 Z" fill="#eef2f8" stroke="#a89a7c"/><text x="1.8" y="9" font-size="7" font-family="Liberation Sans" font-weight="bold" fill="#4a6aa8">P</text></g></svg><div class="t " style="left:802.9px;top:97.54px;font-size:12px;line-height:12px;color:#8e8e8e;font-family:'Liberation Sans', sans-serif;letter-spacing:0.051px;">bootstrap.php</div><svg style="position:absolute;left:903.5px;top:97px" width="9" height="12" viewBox="0 0 9 12"><g opacity="0.55"><path d="M0.5,0.5 L6,0.5 L8.5,3 L8.5,11 L0.5,11 Z" fill="#eef2f8" stroke="#a89a7c"/><rect x="2" y="4" width="5" height="1" fill="#8ea4c8"/><rect x="2" y="6" width="5" height="1" fill="#8ea4c8"/><rect x="2" y="8" width="5" height="1" fill="#8ea4c8"/></g></svg><div class="t " style="left:917.3px;top:97.54px;font-size:12px;line-height:12px;color:#8e8e8e;font-family:'Liberation Sans', sans-serif;letter-spacing:0.088px;">.gitignore</div><svg style="position:absolute;left:994px;top:97px" width="9" height="12" viewBox="0 0 9 12"><g opacity="0.55"><path d="M0.5,0.5 L6,0.5 L8.5,3 L8.5,11 L0.5,11 Z" fill="#eef2f8" stroke="#a89a7c"/><rect x="2" y="4" width="5" height="1" fill="#8ea4c8"/><rect x="2" y="6" width="5" height="1" fill="#8ea4c8"/><rect x="2" y="8" width="5" height="1" fill="#8ea4c8"/></g></svg><div class="t " style="left:1007px;top:97.54px;font-size:12px;line-height:12px;color:#8e8e8e;font-family:'Liberation Sans', sans-serif;letter-spacing:0.173px;">.gitignore</div><svg style="position:absolute;left:1251px;top:97px" width="9" height="12" viewBox="0 0 9 12"><g opacity="1"><path d="M0.5,0.5 L6,0.5 L8.5,3 L8.5,11 L0.5,11 Z" fill="#eef2f8" stroke="#a89a7c"/><rect x="2" y="4" width="5" height="1" fill="#8ea4c8"/><rect x="2" y="6" width="5" height="1" fill="#8ea4c8"/><rect x="2" y="8" width="5" height="1" fill="#8ea4c8"/></g></svg><div class="t " style="left:1264.3px;top:97.14px;font-size:12px;line-height:12px;color:#2a2a2a;font-family:'Liberation Sans', sans-serif;">dev commands .txt</div><div style="left:1247px;top:116px;width:9px;height:474px;background:#f7f7f7"></div><div style="left:1247px;top:572px;width:25px;height:18px;background:#f6f6f6"></div><div style="left:1273px;top:116px;width:90px;height:48px;background:#e8f2fe"></div><div style="left:1273px;top:132px;width:90px;height:16px;background:#0b72d3"></div><div style="left:1273px;top:148px;width:79.5px;height:16px;background:#0b72d3"></div><div class="t " style="left:1263.7px;top:119.71px;font-size:12px;line-height:12px;color:#7a7a7a;font-family:'Liberation Mono', monospace;">1</div><div class="t " style="left:1273.6px;top:119.71px;font-size:12px;line-height:12px;color:#262626;font-family:'Liberation Mono', monospace;letter-spacing:-0.020px;-webkit-text-stroke:0.2px #262626;">backend :</div><div class="t " style="left:1273.6px;top:135.71px;font-size:12px;line-height:12px;color:#fff;font-family:'Liberation Mono', monospace;letter-spacing:-0.020px;-webkit-text-stroke:0.2px #fff;">http://devmarketplace.nl/index</div><div class="t " style="left:1273.6px;top:151.71px;font-size:12px;line-height:12px;color:#fff;font-family:'Liberation Mono', monospace;letter-spacing:-0.020px;-webkit-text-stroke:0.2px #fff;">x.php/admin</div><div style="left:400px;top:598px;width:963px;height:23px;background:#f4f5fa;border-top-left-radius:5px"></div><div style="left:400px;top:621px;width:963px;height:157px;background:#fff;border-left:1px solid #dde1ea;box-sizing:border-box"></div><svg style="position:absolute;left:403.5px;top:604.5px" width="13" height="13" viewBox="0 0 13 13"><rect x="0.5" y="0.5" width="6" height="5" fill="#e9f0e4" stroke="#b8cbb0" stroke-width="0.8"/><circle cx="4.5" cy="3" r="2.3" fill="#f08a8a"/><rect x="0.5" y="6" width="6" height="6.5" fill="#f4b9b9" stroke="#e58e8e" stroke-width="0.8"/><path d="M8,1.5 Q11,0.5 11,4 L9.5,6 L9.5,10" fill="none" stroke="#b0c3d6" stroke-width="1"/><rect x="8" y="11" width="5" height="1" fill="#9aa"/></svg><div class="t " style="left:420.2px;top:604.59px;font-size:12px;line-height:12px;color:#9a9a9a;font-family:'Liberation Sans', sans-serif;letter-spacing:-0.225px;">Problems</div><svg style="position:absolute;left:478px;top:604.5px" width="12" height="12" viewBox="0 0 12 12"><rect x="1.5" y="1.5" width="9" height="10" fill="#f6f1e4" stroke="#cfc2a0" stroke-width="0.9"/><rect x="3.5" y="0.5" width="5" height="2.2" fill="#ddd3b8"/><path d="M0.5,7 L3,9.5 L9,3.5" fill="none" stroke="#6a9bd8" stroke-width="1.3"/></svg><div class="t " style="left:493.6px;top:604.59px;font-size:12px;line-height:12px;color:#9a9a9a;font-family:'Liberation Sans', sans-serif;letter-spacing:-0.905px;">Tasks</div><svg style="position:absolute;left:530px;top:605px" width="11" height="11" viewBox="0 0 11 11"><rect x="0.7" y="0.7" width="9.6" height="7.6" rx="1" fill="#e6eef9" stroke="#6d92c6" stroke-width="1.3"/><rect x="2.5" y="3" width="4" height="1" fill="#8aa4cc"/><rect x="3" y="9" width="5" height="1.6" fill="#6d92c6"/></svg><div class="t " style="left:544.3px;top:604.59px;font-size:12px;line-height:12px;color:#9a9a9a;font-family:'Liberation Sans', sans-serif;letter-spacing:-0.328px;">Console</div><svg style="position:absolute;left:595.5px;top:604.5px" width="10" height="13" viewBox="0 0 10 13"><rect x="0.5" y="2" width="4.5" height="10.5" fill="#e8efe6" stroke="#c6d3c3" stroke-width="0.8"/><rect x="5" y="1" width="4.5" height="11.5" fill="#eef2ee" stroke="#c6d3c3" stroke-width="0.8"/><rect x="1.5" y="0.5" width="3" height="2" fill="#9fd29f"/></svg><div class="t " style="left:610.2px;top:604.59px;font-size:12px;line-height:12px;color:#9a9a9a;font-family:'Liberation Sans', sans-serif;letter-spacing:-0.669px;">PHP Servers</div><div class="t " style="left:407.4px;top:629.94px;font-size:12px;line-height:12px;color:#222;font-family:'Liberation Sans', sans-serif;letter-spacing:-0.134px;">No search results available. Start a search from the </div><div class="t " style="left:676.3px;top:629.94px;font-size:12px;line-height:12px;color:#3366cc;font-family:'Liberation Sans', sans-serif;text-decoration:underline;">search dialog...</div><div style="left:679px;top:195px;width:508px;height:493px;background:#f0f0f0;box-shadow:0 0 2px rgba(0,0,0,0.10), 1px 3px 11px rgba(0,0,0,0.22)"></div><div style="left:680px;top:196px;width:506px;height:30px;background:#fff"></div><div style="left:679px;top:195px;width:1px;height:493px;background:#858585"></div><div style="left:679px;top:195px;width:508px;height:1px;background:#a6a6a6"></div><div style="left:1186px;top:195px;width:1px;height:31px;background:#a6a6a6"></div><svg style="position:absolute;left:687.5px;top:201.5px" width="17" height="17" viewBox="0 0 17 17"><defs><radialGradient id="gb" cx="0.35" cy="0.3" r="0.75"><stop offset="0" stop-color="#b8f0a0"/><stop offset="0.35" stop-color="#3cb83a"/><stop offset="1" stop-color="#0f6a18"/></radialGradient></defs><circle cx="8.3" cy="8.3" r="8" fill="url(#gb)"/><ellipse cx="6" cy="5.2" rx="3.2" ry="2" fill="#e6ffe0" opacity="0.75"/></svg><div class="t " style="left:709.4px;top:205.04px;font-size:12px;line-height:12px;color:#8e8e8e;font-family:'Liberation Sans', sans-serif;letter-spacing:-0.057px;">Available Customizations</div><svg style="position:absolute;left:1165.5px;top:204.5px" width="11" height="11" viewBox="0 0 11 11"><path d="M0.5,0.5 L10.5,10.5 M10.5,0.5 L0.5,10.5" stroke="#555" stroke-width="0.9"/></svg><div style="left:691px;top:240px;width:485px;height:325px;background:#f4f4f4;border:1px solid #c4c4c4;border-top:none;box-sizing:border-box"></div><div style="left:691px;top:240px;width:485px;height:20px;background:#f0f0f0;border-top:1px solid #bdbdbd;border-right:1px solid #c4c4c4;border-top-right-radius:4px;box-sizing:border-box"></div><div style="left:691px;top:259px;width:485px;height:1px;background:#c4c4c4"></div><div style="left:744px;top:240px;width:65px;height:20px;background:#f0f0f0;border:1px solid #bdbdbd;box-sizing:border-box"></div><div style="left:691px;top:240px;width:54px;height:21px;background:linear-gradient(#fbfbfb,#f4f4f4);border:1px solid #bdbdbd;border-bottom:none;border-top-left-radius:3px;box-sizing:border-box"></div><svg style="position:absolute;left:694px;top:245px" width="14" height="13" viewBox="0 0 14 13"><path d="M0.5,2.5 L6,2.5 M4,0.8 L6,2.5 L4,4.2 M0.5,10.5 L6,10.5 M4,8.8 L6,10.5 L4,12.2" fill="none" stroke="#555" stroke-width="0.9"/><rect x="4" y="1" width="2" height="11" fill="#c9c9c9"/><path d="M3.5,5 L9,5 L9,3 L13,6.5 L9,10 L9,8 L3.5,8 Z" fill="#e8c060" stroke="#c09030" stroke-width="0.7"/></svg><div class="t " style="left:710.9px;top:245.44px;font-size:12px;line-height:12px;color:#222;font-family:'Liberation Sans', sans-serif;letter-spacing:-0.334px;">Filters</div><svg style="position:absolute;left:749.5px;top:244px" width="10" height="14" viewBox="0 0 10 14"><line x1="2.5" y1="2" x2="2.5" y2="13" stroke="#555" stroke-width="0.9"/><circle cx="2.5" cy="2.5" r="2.2" fill="#5cb85c"/><circle cx="6.8" cy="7" r="2.2" fill="#5cb85c"/><circle cx="6.8" cy="11.3" r="2.2" fill="#5cb85c"/></svg><div class="t " style="left:764.1px;top:245.44px;font-size:12px;line-height:12px;color:#222;font-family:'Liberation Sans', sans-serif;letter-spacing:-0.095px;">Content</div><div class="t " style="left:697.6px;top:268.54px;font-size:12px;line-height:12px;color:#222;font-family:'Liberation Sans', sans-serif;letter-spacing:0.066px;">Select the filters to apply (matching items will be hidden):</div><div style="left:697px;top:286px;width:473px;height:21px;background:#fff;border:1px solid #a9a9a9;box-sizing:border-box"></div><div class="t " style="left:703.4px;top:290.84px;font-size:12px;line-height:12px;color:#222;font-family:'Liberation Sans', sans-serif;">enter name of filter</div><div style="left:697px;top:311px;width:473px;height:247px;background:#fff;border:1px solid #a9a9a9;box-sizing:border-box;overflow:hidden"></div><div style="left:724px;top:333px;width:329px;height:19px;background:#e5f3ff"></div><svg style="position:absolute;left:704px;top:314px" width="16" height="16" viewBox="0 0 16 16"><rect x="0.5" y="0.5" width="15" height="15" fill="#fff" stroke="#3a3a3a"/></svg><div class="t " style="left:726px;top:316.84px;font-size:12px;line-height:12px;color:#222;font-family:'Liberation Sans', sans-serif;">*.class resources</div><svg style="position:absolute;left:704px;top:334px" width="16" height="16" viewBox="0 0 16 16"><rect x="0.5" y="0.5" width="15" height="15" fill="#fff" stroke="#3a3a3a"/></svg><div class="t " style="left:726px;top:336.84px;font-size:12px;line-height:12px;color:#222;font-family:'Liberation Sans', sans-serif;">.* resources</div><svg style="position:absolute;left:704px;top:354px" width="16" height="16" viewBox="0 0 16 16"><rect x="0.5" y="0.5" width="15" height="15" fill="#fff" stroke="#3a3a3a"/></svg><div class="t " style="left:726px;top:356.84px;font-size:12px;line-height:12px;color:#222;font-family:'Liberation Sans', sans-serif;">Annotations</div><svg style="position:absolute;left:704px;top:374px" width="16" height="16" viewBox="0 0 16 16"><rect x="0.5" y="0.5" width="15" height="15" fill="#fff" stroke="#3a3a3a"/><path d="M3,8.2 L6.3,11.5 L12.8,4.5" fill="none" stroke="#333" stroke-width="1.2"/></svg><div class="t " style="left:726px;top:376.84px;font-size:12px;line-height:12px;color:#222;font-family:'Liberation Sans', sans-serif;">Chromium Virtual File System</div><svg style="position:absolute;left:704px;top:394px" width="16" height="16" viewBox="0 0 16 16"><rect x="0.5" y="0.5" width="15" height="15" fill="#fff" stroke="#3a3a3a"/></svg><div class="t " style="left:726px;top:396.84px;font-size:12px;line-height:12px;color:#222;font-family:'Liberation Sans', sans-serif;">Closed projects</div><svg style="position:absolute;left:704px;top:414px" width="16" height="16" viewBox="0 0 16 16"><rect x="0.5" y="0.5" width="15" height="15" fill="#fff" stroke="#3a3a3a"/><path d="M3,8.2 L6.3,11.5 L12.8,4.5" fill="none" stroke="#333" stroke-width="1.2"/></svg><div class="t " style="left:726px;top:416.84px;font-size:12px;line-height:12px;color:#222;font-family:'Liberation Sans', sans-serif;">Empty library containers</div><svg style="position:absolute;left:704px;top:434px" width="16" height="16" viewBox="0 0 16 16"><rect x="0.5" y="0.5" width="15" height="15" fill="#fff" stroke="#3a3a3a"/></svg><div class="t " style="left:726px;top:436.84px;font-size:12px;line-height:12px;color:#222;font-family:'Liberation Sans', sans-serif;">Empty packages</div><svg style="position:absolute;left:704px;top:454px" width="16" height="16" viewBox="0 0 16 16"><rect x="0.5" y="0.5" width="15" height="15" fill="#fff" stroke="#3a3a3a"/></svg><div class="t " style="left:726px;top:456.84px;font-size:12px;line-height:12px;color:#222;font-family:'Liberation Sans', sans-serif;">Empty packages</div><svg style="position:absolute;left:704px;top:474px" width="16" height="16" viewBox="0 0 16 16"><rect x="0.5" y="0.5" width="15" height="15" fill="#fff" stroke="#3a3a3a"/></svg><div class="t " style="left:726px;top:476.84px;font-size:12px;line-height:12px;color:#222;font-family:'Liberation Sans', sans-serif;">Empty parent packages</div><svg style="position:absolute;left:704px;top:494px" width="16" height="16" viewBox="0 0 16 16"><rect x="0.5" y="0.5" width="15" height="15" fill="#fff" stroke="#3a3a3a"/><path d="M3,8.2 L6.3,11.5 L12.8,4.5" fill="none" stroke="#333" stroke-width="1.2"/></svg><div class="t " style="left:726px;top:496.84px;font-size:12px;line-height:12px;color:#222;font-family:'Liberation Sans', sans-serif;">Empty parent packages</div><svg style="position:absolute;left:704px;top:514px" width="16" height="16" viewBox="0 0 16 16"><rect x="0.5" y="0.5" width="15" height="15" fill="#fff" stroke="#3a3a3a"/></svg><div class="t " style="left:726px;top:516.84px;font-size:12px;line-height:12px;color:#222;font-family:'Liberation Sans', sans-serif;">Enums</div><svg style="position:absolute;left:704px;top:534px" width="16" height="16" viewBox="0 0 16 16"><rect x="0.5" y="0.5" width="15" height="15" fill="#fff" stroke="#3a3a3a"/></svg><div class="t " style="left:726px;top:536.84px;font-size:12px;line-height:12px;color:#222;font-family:'Liberation Sans', sans-serif;">Fields</div><div style="left:704px;top:554px;width:16px;height:3px;overflow:hidden;border:1px solid #333;border-bottom:none;box-sizing:border-box;background:#fff"></div><div style="left:1152px;top:312px;width:16px;height:245px;background:#f0f0f0"></div><div style="left:1152px;top:329.5px;width:16px;height:71.5px;background:#cdcdcd"></div><svg style="position:absolute;left:1155px;top:317px" width="10" height="7" viewBox="0 0 10 7"><path d="M1,5.5 L5,1.5 L9,5.5" fill="none" stroke="#606060" stroke-width="1.5"/></svg><svg style="position:absolute;left:1155px;top:544.5px" width="10" height="7" viewBox="0 0 10 7"><path d="M1,1.5 L5,5.5 L9,1.5" fill="none" stroke="#606060" stroke-width="1.5"/></svg><svg style="position:absolute;left:694.5px;top:652.5px" width="17" height="17" viewBox="0 0 17 17"><circle cx="8.3" cy="8.3" r="7.6" fill="#f3f4f7" stroke="#7a7d85" stroke-width="1.1"/><text x="8.3" y="12.6" text-anchor="middle" font-size="12" font-weight="bold" font-family="Liberation Sans" fill="#5a5e6a">?</text></svg><div style="left:975px;top:650px;width:96px;height:23px;background:#e1e1e1;border:2px solid #0078d7;box-sizing:border-box"></div><div class="t " style="left:1014.3359375px;top:655.84px;font-size:12px;line-height:12px;color:#222;font-family:'Liberation Sans', sans-serif;">OK</div><div style="left:1079px;top:650px;width:96px;height:23px;background:#e1e1e1;border:1px solid #adadad;box-sizing:border-box"></div><div class="t " style="left:1108.3203125px;top:655.84px;font-size:12px;line-height:12px;color:#222;font-family:'Liberation Sans', sans-serif;">Cancel</div>
</body></html>
